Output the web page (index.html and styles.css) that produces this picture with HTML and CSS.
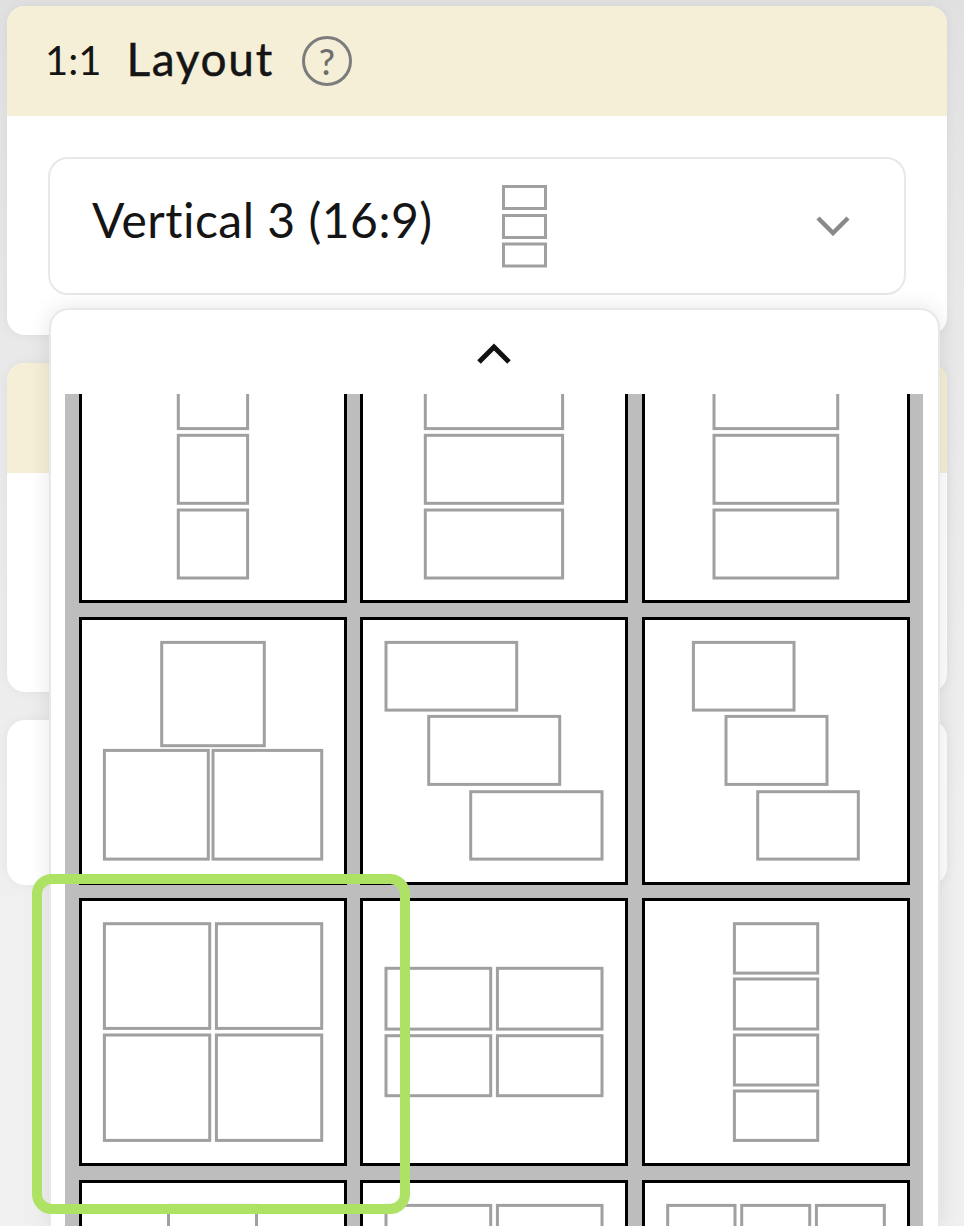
FILE: index.html
```html
<!DOCTYPE html>
<html lang="en">
<head>
    <meta charset="UTF-8">
    <meta name="viewport" content="width=device-width, initial-scale=1.0">
    <title>1:1 Layout</title>
    <link rel="stylesheet" href="styles.css">
</head>
<body>

    <div class="panels">
        <section class="card card-tall">
            <header class="card-head">
                <span class="ratio">1:1</span>
                <h2 class="card-title">Layout</h2>
                <span class="help">?</span>
            </header>
            <div class="card-body">
                <div class="select-box">
                    <span class="select-label">Vertical 3 (16:9)</span>
                    <svg class="select-icon thumb" viewBox="0 0 45 83">
                        <rect x="1.5" y="1.5" width="42" height="22"/>
                        <rect x="1.5" y="30.5" width="42" height="22"/>
                        <rect x="1.5" y="59" width="42" height="22"/>
                    </svg>
                    <svg class="chevron-down" viewBox="0 0 34 20">
                        <path d="M2 2 L17 17 L32 2"/>
                    </svg>
                </div>
            </div>
        </section>

        <section class="card card-tall">
            <header class="card-head"></header>
        </section>

        <section class="card card-short"></section>
    </div>

    <div class="popup">
        <div class="popup-top">
            <svg class="chevron-up" viewBox="0 0 36 22">
                <path d="M3 19 L18 4 L33 19"/>
            </svg>
        </div>
        <div class="scroller">
            <div class="layout-grid">
                <!-- row 1 -->
                <div class="cell">
                    <svg class="thumb" viewBox="3 3 262 262">
                        <rect x="99.3" y="25.6" width="69.3" height="68"/>
                        <rect x="99.3" y="100.3" width="69.3" height="68"/>
                        <rect x="99.3" y="175" width="69.3" height="68"/>
                    </svg>
                </div>
                <div class="cell">
                    <svg class="thumb" viewBox="3 3 262 262">
                        <rect x="65.3" y="25.6" width="137.3" height="68"/>
                        <rect x="65.3" y="100.3" width="137.3" height="68"/>
                        <rect x="65.3" y="175" width="137.3" height="68"/>
                    </svg>
                </div>
                <div class="cell">
                    <svg class="thumb" viewBox="3 3 262 262">
                        <rect x="72" y="25.6" width="123.7" height="68"/>
                        <rect x="72" y="100.3" width="123.7" height="68"/>
                        <rect x="72" y="175" width="123.7" height="68"/>
                    </svg>
                </div>

                <!-- row 2 -->
                <div class="cell">
                    <svg class="thumb" viewBox="3 3 262 262">
                        <rect x="82.7" y="25.4" width="102.6" height="103.3"/>
                        <rect x="25.4" y="133.4" width="103.9" height="108.7"/>
                        <rect x="134" y="133.4" width="108.7" height="108.7"/>
                    </svg>
                </div>
                <div class="cell">
                    <svg class="thumb" viewBox="3 3 262 262">
                        <rect x="26" y="25.4" width="130.7" height="67.7"/>
                        <rect x="68.7" y="99.4" width="131" height="68"/>
                        <rect x="110.7" y="174.7" width="131.3" height="67.4"/>
                    </svg>
                </div>
                <div class="cell">
                    <svg class="thumb" viewBox="3 3 262 262">
                        <rect x="51.4" y="25.4" width="100.6" height="67.7"/>
                        <rect x="84" y="99.4" width="101" height="68"/>
                        <rect x="115.7" y="174.7" width="100.6" height="67.4"/>
                    </svg>
                </div>

                <!-- row 3 -->
                <div class="cell">
                    <svg class="thumb" viewBox="3 3 262 262">
                        <rect x="25.4" y="25.7" width="105.3" height="104.7"/>
                        <rect x="137.4" y="25.7" width="105.3" height="104.7"/>
                        <rect x="25.4" y="137" width="105.3" height="105.4"/>
                        <rect x="137.4" y="137" width="105.3" height="105.4"/>
                    </svg>
                </div>
                <div class="cell">
                    <svg class="thumb" viewBox="3 3 262 262">
                        <rect x="26" y="70.3" width="104.7" height="60.8"/>
                        <rect x="137.4" y="70.3" width="104.6" height="60.8"/>
                        <rect x="26" y="137.7" width="104.7" height="60"/>
                        <rect x="137.4" y="137.7" width="104.6" height="60"/>
                    </svg>
                </div>
                <div class="cell">
                    <svg class="thumb" viewBox="3 3 262 262">
                        <rect x="92.4" y="25.7" width="83.3" height="49.4"/>
                        <rect x="92.4" y="81" width="83.3" height="50"/>
                        <rect x="92.4" y="137" width="83.3" height="50"/>
                        <rect x="92.4" y="193" width="83.3" height="49.4"/>
                    </svg>
                </div>

                <!-- row 4, cut by the bottom of the window -->
                <div class="cell">
                    <svg class="thumb" viewBox="3 3 262 262">
                        <rect x="89.5" y="25.4" width="88" height="216"/>
                    </svg>
                </div>
                <div class="cell">
                    <svg class="thumb" viewBox="3 3 262 262">
                        <rect x="26" y="25.4" width="104.7" height="104"/>
                        <rect x="137.4" y="25.4" width="104.6" height="104"/>
                    </svg>
                </div>
                <div class="cell">
                    <svg class="thumb" viewBox="3 3 262 262">
                        <rect x="25.7" y="25.4" width="67.3" height="104"/>
                        <rect x="99.7" y="25.4" width="68" height="104"/>
                        <rect x="174.4" y="25.4" width="67.9" height="104"/>
                    </svg>
                </div>
            </div>
        </div>
    </div>

    <div class="highlight"></div>

</body>
</html>
```

FILE: styles.css
```css
html, body {
    margin: 0;
    height: 100%;
}

body {
    position: relative;
    overflow: hidden;
    background: linear-gradient(#e0e0e0, #e8e8e8 300px, #f0f0f0 900px);
    font-family: 'Lato', 'Liberation Sans', sans-serif;
    color: #151515;
}

.panels {
    display: flex;
    flex-direction: column;
    gap: 28px;
    padding: 6px 17px 0 7px;
}

.card {
    background: #fff;
    border-radius: 18px;
    box-shadow: 0 0 12px rgba(0, 0, 0, 0.05);
    overflow: hidden;
}

.card-tall {
    height: 329px;
}

.card-short {
    height: 165px;
}

.card-head {
    display: flex;
    align-items: center;
    height: 110px;
    padding-left: 38px;
    background: #f5efd7;
    box-sizing: border-box;
}

.ratio {
    margin-bottom: 2px;
    font-size: 40px;
}

.card-title {
    margin: 0 0 5px 25px;
    font-size: 46px;
    font-weight: 400;
    letter-spacing: 1.7px;
    -webkit-text-stroke: 0.5px #151515;
}

.help {
    display: flex;
    justify-content: center;
    align-items: center;
    width: 44px;
    height: 44px;
    margin-left: 28px;
    border: 3.5px solid #7c7c7c;
    border-radius: 50%;
    color: #6e6e6e;
    font-size: 36px;
    font-weight: 500;
    line-height: 1;
}

.card-body {
    padding: 41px 41px 0 41px;
}

.select-box {
    display: flex;
    align-items: center;
    height: 138px;
    padding: 0 54px 0 42px;
    border: 2.5px solid #e8e8e8;
    border-radius: 20px;
    box-sizing: border-box;
}

.select-label {
    padding-bottom: 13px;
    font-size: 48px;
    letter-spacing: 0.5px;
}

.select-icon {
    width: 45px;
    height: 83px;
    margin-left: 69px;
}

.chevron-down {
    width: 34px;
    height: 20px;
    margin-left: auto;
}

.chevron-down path {
    fill: none;
    stroke: #8a8a8a;
    stroke-width: 4.5;
}

.thumb rect {
    fill: none;
    stroke: #a0a0a0;
    stroke-width: 3;
}

/* dropdown that hangs over the cards */
.popup {
    position: absolute;
    left: 49px;
    top: 308px;
    bottom: 0;
    display: flex;
    flex-direction: column;
    width: 891px;
    padding: 0 15px 0 14px;
    background: #fff;
    border: 2.5px solid #e8e8e8;
    border-bottom: none;
    border-radius: 20px 20px 0 0;
    box-sizing: border-box;
    box-shadow: 0 0 22px rgba(0, 0, 0, 0.1);
}

.popup-top {
    display: flex;
    flex: none;
    justify-content: center;
    align-items: flex-start;
    height: 83.5px;
    padding-top: 33px;
    box-sizing: border-box;
}

.chevron-up {
    width: 36px;
    height: 22px;
}

.chevron-up path {
    fill: none;
    stroke: #111;
    stroke-width: 5;
}

.scroller {
    flex: 1;
    min-height: 0;
    overflow: hidden;
}

.layout-grid {
    display: grid;
    grid-template-columns: repeat(3, 1fr);
    gap: 13.6px;
    margin-top: -71.6px;
    padding: 13.3px 13px 13.3px 13.8px;
    background: #bdbdbd;
}

.cell {
    aspect-ratio: 1;
    background: #fff;
    border: 3px solid #000;
    box-sizing: border-box;
}

.cell svg {
    display: block;
    width: 100%;
    height: 100%;
}

/* green marker drawn on top of the screenshot */
.highlight {
    position: absolute;
    left: 32px;
    top: 873.5px;
    width: 378px;
    height: 340.5px;
    border: 10.5px solid #aee264;
    border-radius: 20px;
    box-sizing: border-box;
}
```
